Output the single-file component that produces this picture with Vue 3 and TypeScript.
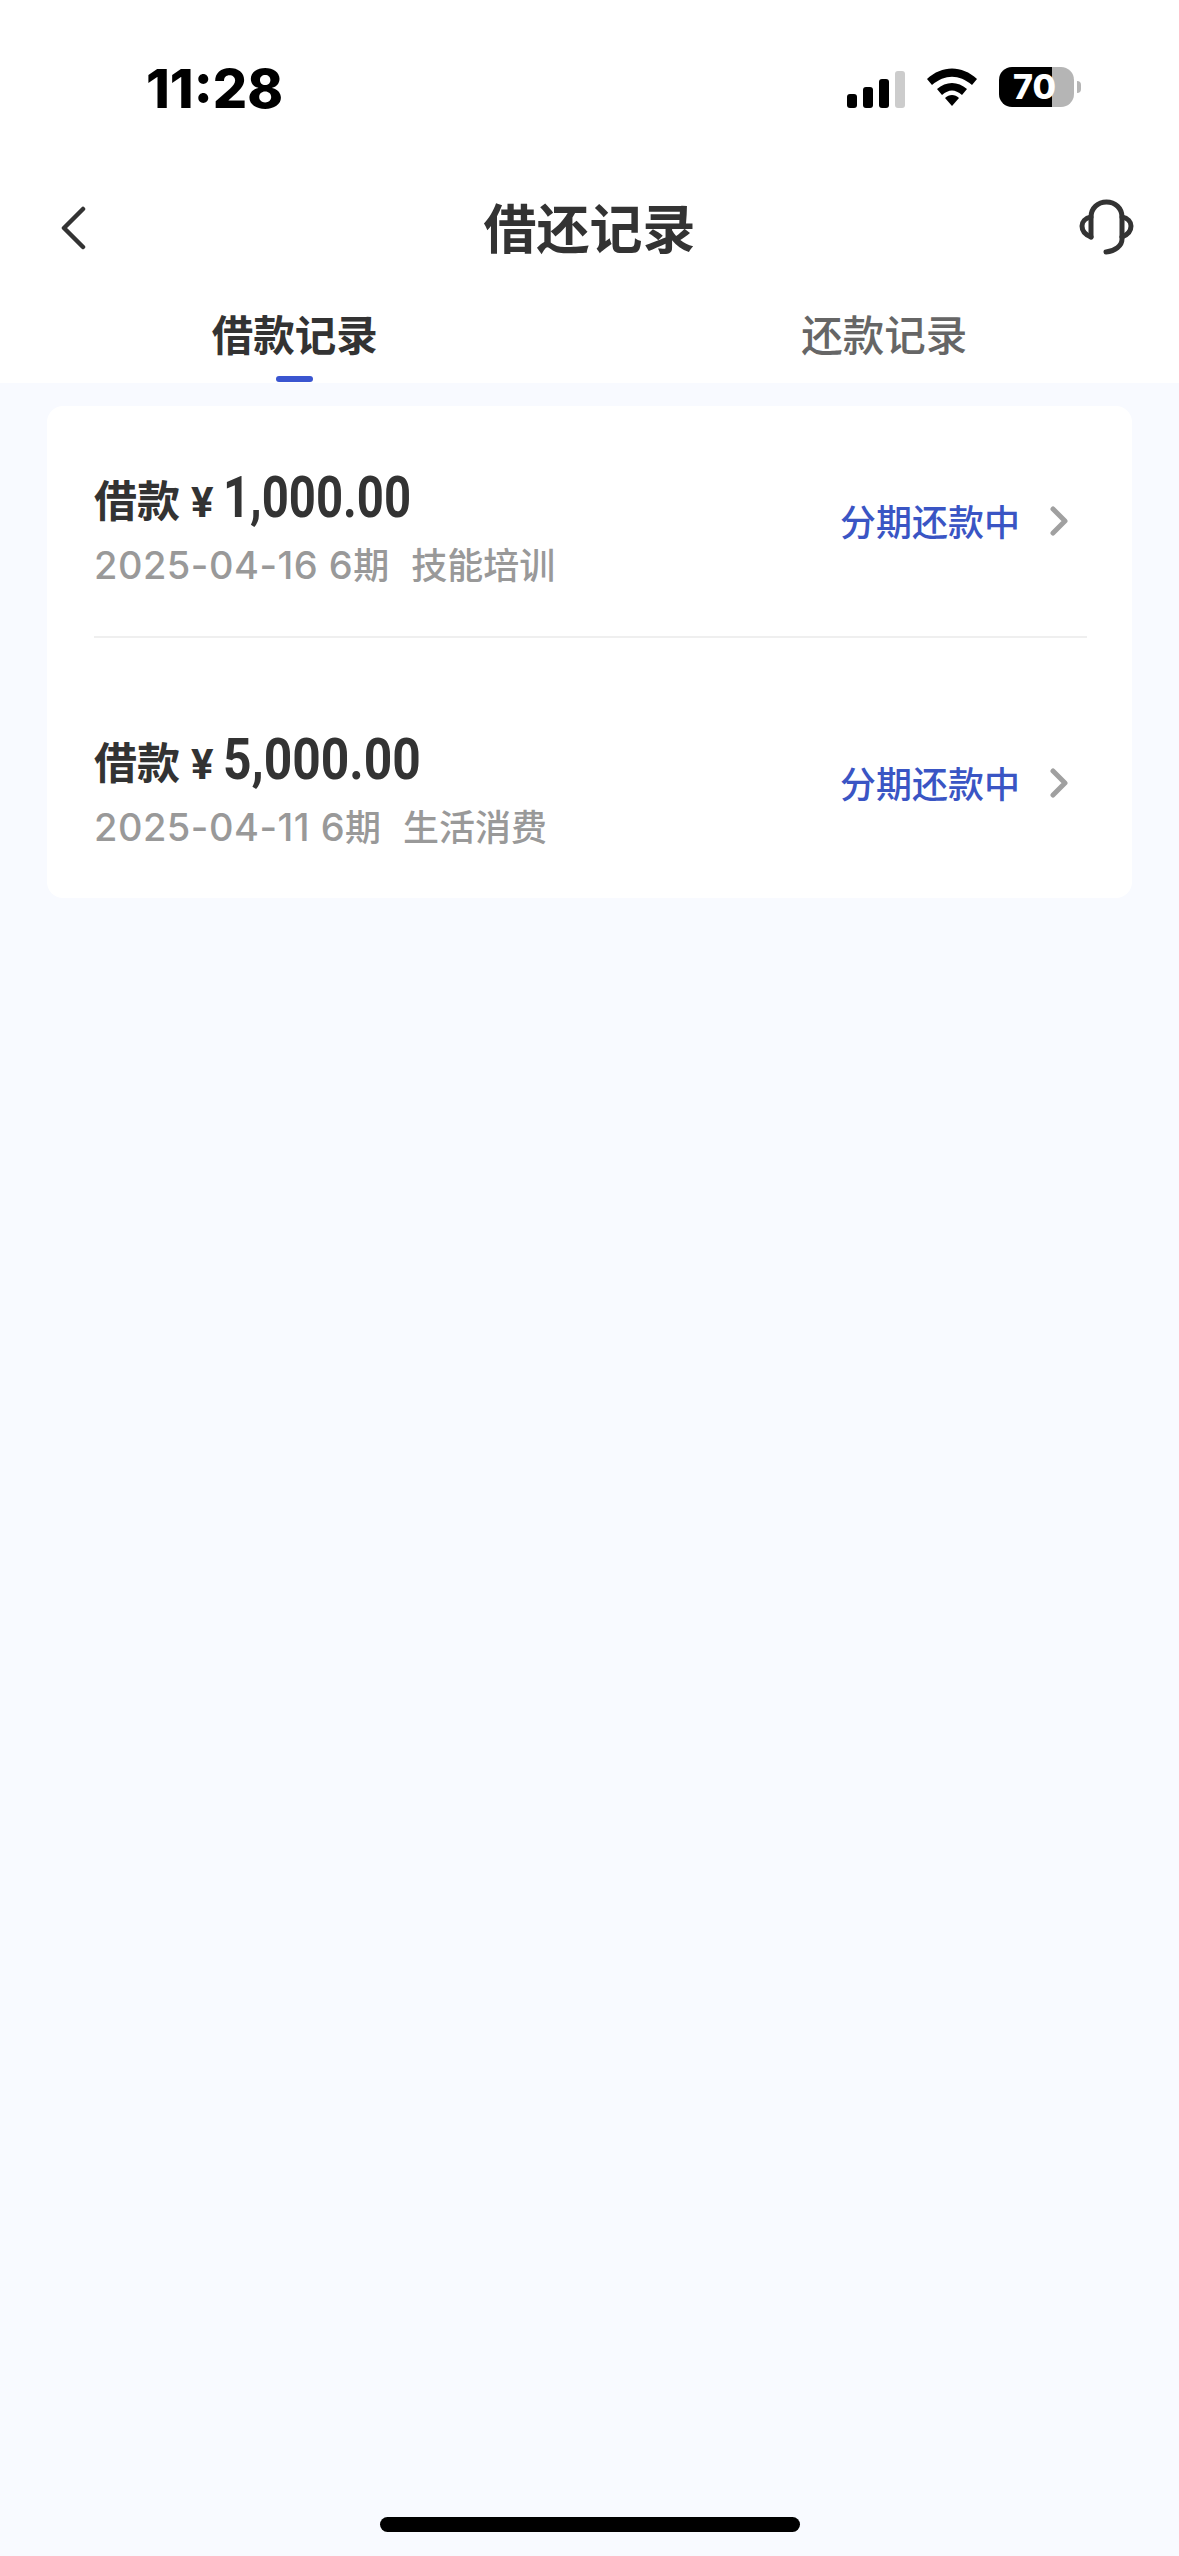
<template>
  <div class="page">
    <header class="top">
      <div class="status">
        <span class="time">11:28</span>
        <div class="status-icons">
          <div class="signal">
            <i class="b1"></i><i class="b2"></i><i class="b3"></i><i class="b4"></i>
          </div>
          <svg class="wifi" width="50" height="38" viewBox="0 0 50 38">
            <path d="M0 11 C15 -3 35 -3 50 11 L45 17 C32 6 18 6 5 17 Z" fill="#000" />
            <path d="M10 21 C19 13 31 13 40 21 L35 27 C28 21 22 21 15 27 Z" fill="#000" />
            <path d="M18 30 C22 26 28 26 32 30 L25 38 Z" fill="#000" />
          </svg>
          <div class="battery">
            <div class="battery-body"><span>70</span></div>
            <div class="battery-tip"></div>
          </div>
        </div>
      </div>

      <div class="nav">
        <svg class="back" width="26" height="44" viewBox="0 0 26 44">
          <path d="M23 3 L4 22 L23 41" fill="none" stroke="#333" stroke-width="4.5" stroke-linecap="round" stroke-linejoin="round" />
        </svg>
        <h1>借还记录</h1>
        <svg class="headset" width="60" height="60" viewBox="0 0 60 60" fill="none" stroke="#333" stroke-width="5" stroke-linecap="round">
          <path d="M14 40 V20 C14 11 21 5 29.5 5 C38 5 45 11 45 20 V42 C45 49 38 54 29 55" />
          <path d="M14 20 C8 21 5 25 5 29 C5 34 9 38 14 40" />
          <path d="M45 20 C51 21 54 25 54 29 C54 34 50 38 45 40" />
        </svg>
      </div>

      <div class="tabs">
        <div v-for="(t, idx) in tabs" :key="t" class="tab" :class="{ active: idx === 0 }">{{ t }}</div>
      </div>
    </header>

    <section class="card">
      <div v-for="r in records" :key="r.date" class="row">
        <div class="info">
          <div class="title">
            <span class="label">借款</span>
            <span class="yen">¥</span>
            <span class="amount" :class="{ narrow: r.amount.startsWith('1') }">{{ r.amount }}</span>
          </div>
          <div class="sub">
            <span class="nums">{{ r.date }} 6</span><span>期</span><span class="purpose">{{ r.purpose }}</span>
          </div>
        </div>
        <div class="state">分期还款中</div>
        <svg class="arrow" width="18" height="30" viewBox="0 0 18 30">
          <path d="M3 3 L15 15 L3 27" fill="none" stroke="#a0a0a0" stroke-width="5" stroke-linecap="round" stroke-linejoin="round" />
        </svg>
      </div>
    </section>

    <div class="home-bar"></div>
  </div>
</template>

<script setup lang="ts">
const tabs: string[] = ['借款记录', '还款记录'];

const records = [
  { amount: '1,000.00', date: '2025-04-16', purpose: '技能培训' },
  { amount: '5,000.00', date: '2025-04-11', purpose: '生活消费' },
];
</script>

<style>
html, body { margin: 0; background: #f8faff; }
</style>

<style scoped>
.page {
  width: 1179px;
  height: 2556px;
  display: flex;
  flex-direction: column;
  background: #f8faff;
  font-family: "Noto Sans CJK SC", "Noto Sans", sans-serif;
  color: #333;
  overflow: hidden;
}
.top { background: #fff; height: 383px; flex-shrink: 0; }
.status {
  height: 176px;
  box-sizing: border-box;
  padding: 67px 98px 0 146px;
  display: flex;
  justify-content: space-between;
  align-items: flex-start;
}
.time {
  font-family: Inter, sans-serif;
  font-size: 54px;
  font-weight: 800;
  line-height: 44px;
  color: #000;
}
.status-icons { display: flex; align-items: flex-start; }
.signal { display: flex; align-items: flex-end; gap: 6px; height: 39px; margin-top: 2px; }
.signal i { display: block; width: 10px; background: #000; border-radius: 3px; }
.signal .b1 { height: 14px; }
.signal .b2 { height: 21px; }
.signal .b3 { height: 29px; }
.signal .b4 { height: 37px; background: #ccc; }
.wifi { margin: 1px 22px 0 22px; }
.battery { display: flex; align-items: center; }
.battery-body {
  width: 75px;
  height: 40px;
  border-radius: 13px;
  background: linear-gradient(90deg, #000 0 53px, #b5b5b5 53px);
  color: #fff;
  font-family: Inter, sans-serif;
  font-size: 34px;
  font-weight: 800;
  line-height: 40px;
  padding-left: 14px;
  box-sizing: border-box;
}
.battery-tip { width: 4px; height: 12px; margin-left: 3px; background: #b5b5b5; border-radius: 0 4px 4px 0; }
.nav {
  height: 100px;
  padding: 0 42px;
  display: grid;
  grid-template-columns: 1fr auto 1fr;
  align-items: center;
}
.back { margin: 3px 0 0 18px; }
.nav h1 {
  margin: 0;
  font-size: 53px;
  font-weight: 700;
  line-height: 1;
}
.headset { margin-top: 2px; justify-self: end; }
.tabs { display: flex; height: 107px; }
.tab {
  flex: 1;
  position: relative;
  text-align: center;
  font-size: 41.5px;
  line-height: 60px;
  padding-top: 27px;
  color: #666;
  font-weight: 500;
}
.tab.active { color: #333; font-weight: 700; }
.tab.active::after {
  content: "";
  position: absolute;
  left: 50%;
  bottom: 1px;
  width: 37px;
  height: 6px;
  margin-left: -19px;
  border-radius: 4px;
  background: #3a55d0;
}
.card {
  margin: 23px 47px 0 47px;
  padding: 0 45px 0 47px;
  background: #fff;
  border-radius: 16px;
}
.row {
  height: 230px;
  display: flex;
  align-items: center;
}
.row:first-child { border-bottom: 2px solid #efefef; }
.row + .row { margin-top: 30px; }
.info { flex: 1; padding-top: 10px; }
.title { display: flex; align-items: baseline; height: 64px; line-height: 64px; }
.label { font-size: 43px; font-weight: 700; }
.yen { margin-left: 11px; font-size: 42px; font-weight: 700; font-family: Roboto, sans-serif; }
.amount {
  display: inline-block;
  margin-left: 9px;
  font-family: Roboto, sans-serif;
  font-size: 58px;
  font-weight: 700;
  transform: scaleX(0.857);
  transform-origin: left center;
}
.amount.narrow { transform: scaleX(0.815); }
.sub {
  margin-top: 12px;
  font-size: 36px;
  line-height: 44px;
  color: #999;
  font-weight: 500;
}
.nums { font-family: Inter, sans-serif; font-size: 38px; font-weight: 500; letter-spacing: 0.5px; }
.purpose { margin-left: 22px; }
.state { font-size: 36px; font-weight: 500; color: #3a55c4; margin-top: -2px; }
.arrow { margin-left: 30px; margin-right: 19px; }
.home-bar {
  margin: auto auto 24px;
  width: 420px;
  height: 15px;
  border-radius: 8px;
  background: #000;
}
</style>
